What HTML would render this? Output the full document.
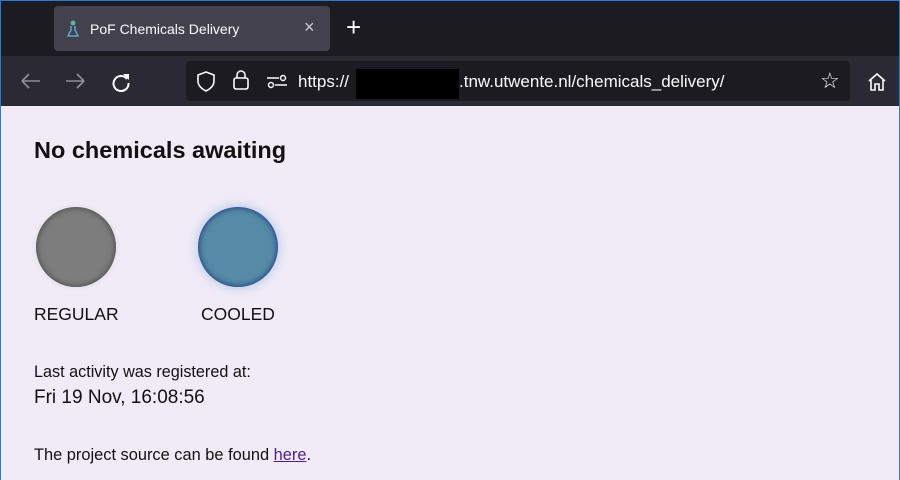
<!DOCTYPE html><html><head><style>
*{margin:0;padding:0;box-sizing:border-box}
body{width:900px;height:480px;overflow:hidden;background:#1c1b22;font-family:"Liberation Sans",sans-serif;position:relative}
.frame{position:absolute;left:0;top:0;width:900px;height:480px;border:1px solid #2b78d6;border-bottom:none;pointer-events:none;z-index:5}
.tabbar{position:absolute;left:0;top:0;width:900px;height:56px;background:#1c1b22}
.tab{position:absolute;left:54px;top:6px;width:276px;height:45px;background:#42414d;border-radius:4px;color:#fbfbfe;font-size:14px}
.nav{position:absolute;left:0;top:56px;width:900px;height:50px;background:#2b2a33}
.url{position:absolute;left:186px;top:5px;width:664px;height:40px;background:#1c1b22;border-radius:4px;color:#fbfbfe;font-size:17px}
.page{position:absolute;left:0;top:106px;width:900px;height:374px;background:#f0ebf6;color:#111}
.c{position:absolute;width:80px;height:80px;border-radius:50%}
</style></head><body>
<div class="frame"></div>
<div class="tabbar">
<div class="tab">
<svg style="position:absolute;left:12px;top:13px" width="14" height="20" viewBox="0 0 14 20"><path d="M5 7v4l-3 6h10l-3-6V7" fill="none" stroke="#5fa7c8" stroke-width="1.5"/><circle cx="7" cy="4" r="2.5" fill="#5fb0a0"/></svg>
<span style="position:absolute;left:36px;top:15px">PoF Chemicals Delivery</span>
<span style="position:absolute;left:250px;top:11px;font-size:18px;color:#ccc">×</span>
</div>
<span style="position:absolute;left:346px;top:14px;color:#fbfbfe;font-size:26px;line-height:26px">+</span>
</div>
<div class="nav">
<svg style="position:absolute;left:20px;top:15px" width="22" height="20"><path d="M2 10h18M2 10l7-7M2 10l7 7" stroke="#8f8f9d" stroke-width="1.6" fill="none"/></svg>
<svg style="position:absolute;left:64px;top:15px" width="22" height="20"><path d="M2 10h18M20 10l-7-7M20 10l-7 7" stroke="#8f8f9d" stroke-width="1.6" fill="none"/></svg>
<svg style="position:absolute;left:110px;top:15px" width="22" height="22"><path d="M17 8A7.5 7.5 0 1 0 18.5 12" stroke="#fbfbfe" stroke-width="2" fill="none"/><path d="M13 3h6v6z" fill="#fbfbfe"/></svg>
<div class="url">
<svg style="position:absolute;left:10px;top:10px" width="20" height="22"><path d="M10 1L2 4v6c0 5 4 8 8 10 4-2 8-5 8-10V4z" stroke="#fbfbfe" stroke-width="1.6" fill="none"/></svg>
<svg style="position:absolute;left:46px;top:8px" width="18" height="22"><rect x="2" y="9" width="14" height="11" rx="2" stroke="#fbfbfe" stroke-width="1.6" fill="none"/><path d="M5 9V6a4 4 0 0 1 8 0v3" stroke="#fbfbfe" stroke-width="1.6" fill="none"/></svg>
<svg style="position:absolute;left:80px;top:12px" width="22" height="16"><path d="M1 5h12M9 12h12" stroke="#fbfbfe" stroke-width="1.6"/><circle cx="17" cy="5" r="2.5" stroke="#fbfbfe" stroke-width="1.4" fill="none"/><circle cx="5" cy="12" r="2.5" stroke="#fbfbfe" stroke-width="1.4" fill="none"/></svg>
<span style="position:absolute;left:112px;top:11px">https://</span>
<div style="position:absolute;left:170px;top:8px;width:103px;height:30px;background:#000"></div>
<span style="position:absolute;left:273px;top:11px">.tnw.utwente.nl/chemicals_delivery/</span>
<span style="position:absolute;left:634px;top:7px;font-size:22px">☆</span>
</div>
<svg style="position:absolute;left:866px;top:15px" width="22" height="22"><path d="M3 10L11 3l8 7M5 9v10h4v-6h4v6h4V9" stroke="#fbfbfe" stroke-width="1.6" fill="none"/></svg>
</div>
<div class="page">
<div style="position:absolute;left:34px;top:31px;font-size:23.5px;font-weight:bold">No chemicals awaiting</div>
<div class="c" style="left:36px;top:101px;background:#7d7d7d;box-shadow:inset 0 0 6px 1px #4e4e4e,0 0 6px rgba(0,0,0,.08)"></div>
<div class="c" style="left:198px;top:101px;background:#558ba5;box-shadow:inset 0 0 6px 1px #273f85,0 0 8px 3px rgba(120,170,230,.35)"></div>
<div style="position:absolute;left:34px;top:198px;font-size:17.5px">REGULAR</div>
<div style="position:absolute;left:201px;top:198px;font-size:17.5px">COOLED</div>
<div style="position:absolute;left:34px;top:257px;font-size:16.2px">Last activity was registered at:</div>
<div style="position:absolute;left:34px;top:281px;font-size:19px">Fri 19 Nov, 16:08:56</div>
<div style="position:absolute;left:34px;top:340px;font-size:16.4px">The project source can be found <span style="color:#551a8b;text-decoration:underline">here</span>.</div>
</div>
</body></html>
